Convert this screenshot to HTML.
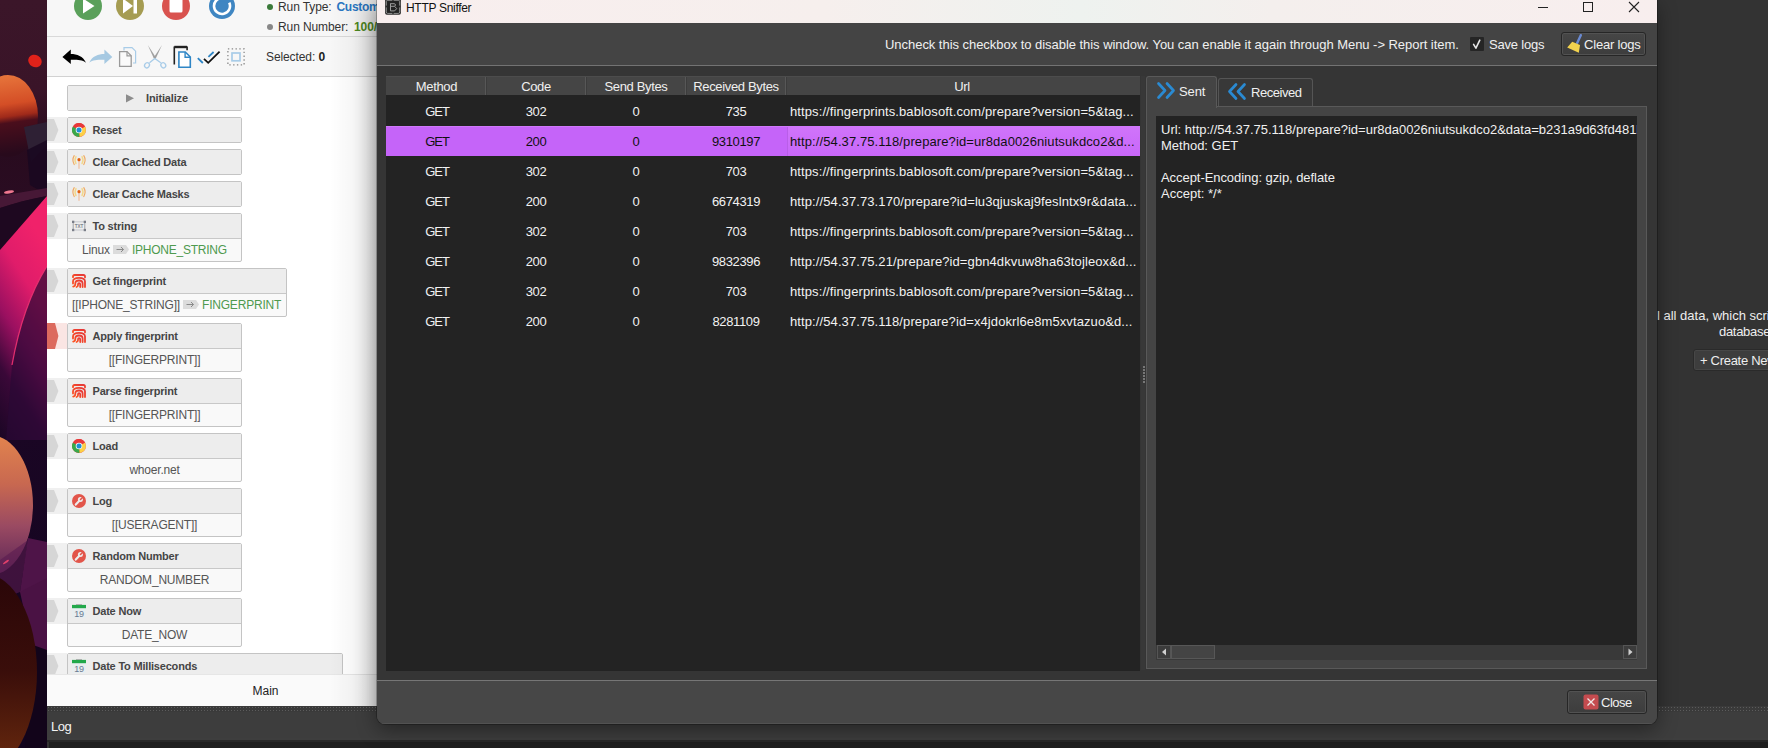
<!DOCTYPE html>
<html><head><meta charset="utf-8">
<style>
*{margin:0;padding:0;box-sizing:border-box}
html,body{width:1768px;height:748px;overflow:hidden;background:#2a2a2a;font-family:"Liberation Sans",sans-serif}
.a{position:absolute}
.tx{white-space:pre}
svg{display:block}
#wall{left:0;top:0;width:47px;height:748px;overflow:hidden}
#bas{left:47px;top:0;width:330px;height:706px;background:#fafafa;overflow:hidden}
#bottom{left:47px;top:706px;width:1721px;height:42px;background:#262626;overflow:hidden}
#right{left:1657px;top:0;width:111px;height:706px;background:#333;overflow:hidden}
#win{left:377px;top:0;width:1280px;height:724px;background:#474747;border-radius:0 0 8px 8px;overflow:hidden;box-shadow:0 0 0 1px rgba(0,0,0,.25),0 6px 20px rgba(0,0,0,.4)}
</style></head><body>
<div id="wall" class="a"><svg width="47" height="748" viewBox="0 0 47 748">
<defs>
<linearGradient id="g0" x1="0" y1="0" x2="0" y2="1"><stop offset="0" stop-color="#3b1629"/><stop offset="0.12" stop-color="#3a1428"/><stop offset="0.19" stop-color="#280b1e"/><stop offset="0.27" stop-color="#2a0c22"/><stop offset="1" stop-color="#2a0c24"/></linearGradient>
<linearGradient id="dome" x1="0" y1="0" x2="0.1" y2="1"><stop offset="0" stop-color="#e97a3e"/><stop offset="0.4" stop-color="#d44e26"/><stop offset="0.55" stop-color="#a02a1a"/><stop offset="0.63" stop-color="#4a0e1c"/><stop offset="1" stop-color="#280a1c"/></linearGradient>
<linearGradient id="mag" x1="0.3" y1="0" x2="0" y2="1"><stop offset="0" stop-color="#f0226a"/><stop offset="0.25" stop-color="#e01c6a"/><stop offset="0.5" stop-color="#9a1060"/><stop offset="0.72" stop-color="#3a0838"/><stop offset="1" stop-color="#1a0624"/></linearGradient>
<linearGradient id="sph" x1="0" y1="0" x2="0" y2="1"><stop offset="0" stop-color="#e2844e"/><stop offset="0.35" stop-color="#c86850"/><stop offset="0.65" stop-color="#9a4a62"/><stop offset="1" stop-color="#5a2456"/></linearGradient>
<linearGradient id="brn" x1="0" y1="0" x2="0" y2="1"><stop offset="0" stop-color="#2a0608"/><stop offset="0.5" stop-color="#3a0e0a"/><stop offset="1" stop-color="#6a2a0e"/></linearGradient>
<linearGradient id="pur" x1="0" y1="0" x2="0" y2="1"><stop offset="0" stop-color="#2a0a2c"/><stop offset="0.3" stop-color="#1a0624"/><stop offset="1" stop-color="#12041e"/></linearGradient>
</defs>
<rect width="47" height="748" fill="url(#g0)"/>
<rect y="300" width="47" height="448" fill="url(#pur)"/>
<ellipse cx="8" cy="116" rx="30" ry="41" fill="url(#dome)"/>
<path d="M24 127L47 122V145L31 162z" fill="#2e2034"/>
<path d="M27 150L47 140V195L30 185z" fill="#1a0820" opacity="0.9"/>
<ellipse cx="35" cy="61" rx="7" ry="6" transform="rotate(30 35 61)" fill="#e0221a"/>
<ellipse cx="9" cy="192" rx="5" ry="1.4" transform="rotate(-10 9 192)" fill="#f07890"/>
<path d="M0 196C15 193 32 191 47 188V196C30 199 15 203 0 208z" fill="#4a1a38" opacity="0.9"/><path d="M0 208C15 203 30 199 47 196L0 250z" fill="#1e0820"/>
<path d="M0 250L47 196V440L0 440z" fill="url(#mag)"/><path d="M47 266C32 290 20 320 12 365L6 440H47z" fill="#2a0834" opacity="0.7"/>
<path d="M47 266C32 290 20 320 12 365" stroke="#ee3272" stroke-width="1.3" fill="none" opacity="0.9"/>
<ellipse cx="-10" cy="505" rx="43" ry="70" fill="url(#sph)"/>
<path d="M28 538L47 542V600L20 592z" fill="#4e1448"/>
<path d="M0 560L28 540 20 592 0 600z" fill="#5a1a50" opacity="0.6"/>
<path d="M20 592L47 578V660L35 660z" fill="#4a1244"/>
<ellipse cx="6" cy="562" rx="3.5" ry="1" transform="rotate(-35 6 562)" fill="#e0406a"/>
<path d="M33 645L47 650V748H25z" fill="#12041a"/>
<ellipse cx="-15" cy="672" rx="52" ry="98" fill="url(#brn)"/>
</svg></div>
<div id="bas" class="a"><div class="a" style="left:0;top:0;width:330px;height:76px;background:#f7f7f7"></div>
<div class="a" style="left:0;top:36px;width:330px;height:1px;background:#d9d9d9"></div>
<div class="a" style="left:0;top:76px;width:330px;height:1px;background:#d2d2d2"></div>
<div class="a" style="left:0;top:77px;width:330px;height:597px;background:#fff"></div>
<svg class="a" style="left:23px;top:-12px" width="170" height="34" viewBox="0 0 170 34">
<circle cx="18" cy="18" r="14" fill="#5aa05a"/><path d="M13 10.5L24.5 18 13 25.5z" fill="#fff"/>
<circle cx="60" cy="18" r="14" fill="#a59c52"/><path d="M53 10.5L63 18 53 25.5z" fill="#fff"/><rect x="63.5" y="10.5" width="3.5" height="15" fill="#fff"/>
<circle cx="106" cy="18" r="14" fill="#d9534f"/><rect x="99.5" y="10.5" width="13" height="14" rx="1.5" fill="#fff"/>
<circle cx="152" cy="18" r="13" fill="#3f86c2"/><path d="M159.25 14.62A8 8 0 1 1 153.39 10.12" fill="none" stroke="#fff" stroke-width="2.6"/><circle cx="152" cy="18" r="4.8" fill="#3f86c2"/>
</svg>
<div class="a" style="left:220px;top:4px;width:6px;height:6px;border-radius:50%;background:#3a7a3a"></div>
<div class="a" style="left:220px;top:24px;width:6px;height:6px;border-radius:50%;background:#888"></div>
<div class="a tx" style="left:231px;top:1px;font-size:12px;line-height:12px;color:#333;font-weight:400;letter-spacing:-0.1px">Run Type:</div>
<div class="a tx" style="left:289.5px;top:1px;font-size:12px;line-height:12px;color:#2a78c4;font-weight:700;letter-spacing:-0.3px">Custom</div>
<div class="a tx" style="left:231px;top:21px;font-size:12px;line-height:12px;color:#333;font-weight:400;letter-spacing:-0.1px">Run Number:</div>
<div class="a tx" style="left:307px;top:21px;font-size:12px;line-height:12px;color:#4e8a22;font-weight:700;letter-spacing:-0.1px">100/</div>
<svg class="a" style="left:13px;top:44px" width="190" height="26" viewBox="0 0 190 26">
<path d="M2.4 12.9L10.8 5.6V9.9C17 9.9 23 12 26 18.7C22 15.5 17 15.7 10.8 15.7V20z" fill="#000"/>
<path d="M52.3 12.9L44.4 5.6V9.9C38.2 9.9 32.2 12 29.2 18.7C33.2 15.5 38.2 15.7 44.4 15.7V20z" fill="#a6c9e2"/>
<path d="M64 6.5V3.6h8l3.6 3.6V19H73" fill="none" stroke="#a8cce8" stroke-width="1.2"/>
<path d="M59.6 7.6h7.4l4.2 4.2V22.4H59.6z" fill="#fafafa" stroke="#9a9a9a" stroke-width="1.3"/><path d="M67 7.6v4.2h4.2" fill="none" stroke="#9a9a9a" stroke-width="1.2"/>
<path d="M87.8 1L95.9 13.6 94.2 15.2z" fill="#a0a0a0"/><path d="M102 1L95.4 15.2 93.8 13.6z" fill="#a0a0a0"/>
<g fill="none" stroke="#a8cce8" stroke-width="1.3"><path d="M94.8 14.4L89.5 18.8M94.8 14.4L100.8 18.8"/><ellipse cx="87" cy="21.3" rx="2.3" ry="2.7" transform="rotate(35 87 21.3)"/><ellipse cx="103.3" cy="21.3" rx="2.3" ry="2.7" transform="rotate(-35 103.3 21.3)"/></g>
<path d="M114.3 20.6V3.3h12.8v3" fill="none" stroke="#222" stroke-width="1.6"/><path d="M114.3 3h12.8" stroke="#222" stroke-width="2.4"/>
<path d="M118.9 8h6.4l5 5v10.2h-11.4z" fill="#fff" stroke="#2f86c6" stroke-width="1.6"/><path d="M125.1 8v5.3h5.3" fill="none" stroke="#2f86c6" stroke-width="1.4"/>
<path d="M137.8 14.2L142.8 19" stroke="#2f86c6" stroke-width="1.8"/><path d="M144 14.8L148.2 18.8 159.6 7.6" fill="none" stroke="#111" stroke-width="1.8"/><path d="M148.4 12.8L153.6 8" stroke="#2f86c6" stroke-width="1.8"/>
<rect x="167.9" y="4.9" width="16.2" height="16" fill="none" stroke="#8a8a8a" stroke-width="1.3" stroke-dasharray="1.4 2.4"/><rect x="172" y="9" width="8" height="7.8" fill="none" stroke="#a8cce8" stroke-width="1.7"/>
</svg>
<div class="a tx" style="left:219px;top:51px;font-size:12px;line-height:12px;color:#333;font-weight:400;letter-spacing:-0.1px">Selected: <b style="color:#222">0</b></div>
<div class="a" style="left:20px;top:85px;width:175px;height:26px;background:#f9f9f9;border:1px solid #c4c4c4;border-radius:2px"></div>
<div class="a" style="left:21px;top:86px;width:173px;height:24px;background:#ededed"></div>
<svg class="a" style="left:79px;top:94px" width="9" height="9" viewBox="0 0 9 9"><path d="M0 0.2L8 4.3 0 8.4z" fill="#8c8c8c"/></svg>
<div class="a tx" style="left:99px;top:93px;font-size:11px;line-height:11px;color:#454545;font-weight:700;letter-spacing:-0.15px">Initialize</div>
<div class="a" style="left:0;top:117px;width:20px;height:26px;background:#f0f0f0"></div>
<svg class="a" style="left:0;top:119px" width="14" height="22" viewBox="0 0 14 22"><path d="M0 0H7L11.4 11.0L7 22H0z" fill="#d6d6d6"/></svg>
<div class="a" style="left:20px;top:117px;width:175px;height:26px;background:#f9f9f9;border:1px solid #c4c4c4;border-radius:2px"></div>
<div class="a" style="left:21px;top:118px;width:173px;height:24px;background:#ededed"></div>
<div class="a" style="left:25px;top:123px;width:14px;height:14px"><svg width="14" height="14" viewBox="0 0 14 14"><circle cx="7" cy="7" r="6.9" fill="#e8393a"/>
<path d="M7 7L13 3.6A6.9 6.9 0 0 1 7.4 13.9z" fill="#fcd046"/><path d="M7 7L7.4 13.9A6.9 6.9 0 0 1 1 3.4z" fill="#3aa84a"/>
<path d="M7 7L1 3.4A6.9 6.9 0 0 1 13 3.6z" fill="#e8393a"/>
<circle cx="7" cy="7" r="3.3" fill="#f4f4f4"/><circle cx="7" cy="7" r="2.5" fill="#1d8fd6"/></svg></div>
<div class="a tx" style="left:45.5px;top:125px;font-size:11px;line-height:11px;color:#454545;font-weight:700;letter-spacing:-0.2px">Reset</div>
<div class="a" style="left:0;top:149px;width:20px;height:26px;background:#f0f0f0"></div>
<svg class="a" style="left:0;top:151px" width="14" height="22" viewBox="0 0 14 22"><path d="M0 0H7L11.4 11.0L7 22H0z" fill="#d6d6d6"/></svg>
<div class="a" style="left:20px;top:149px;width:175px;height:26px;background:#f9f9f9;border:1px solid #c4c4c4;border-radius:2px"></div>
<div class="a" style="left:21px;top:150px;width:173px;height:24px;background:#ededed"></div>
<div class="a" style="left:25px;top:155px;width:14px;height:14px"><svg width="14" height="14" viewBox="0 0 14 14"><g fill="none" stroke-linecap="round">
<path d="M2.2 0.6Q-0.4 5 2.2 9.6M11.8 0.6Q14.4 5 11.8 9.6" stroke="#f0a860" stroke-width="1.1"/><path d="M4 1.6Q2 5 4 8.6M10 1.6Q12 5 10 8.6" stroke="#f3d888" stroke-width="1.4"/></g>
<path d="M7 5v8.8" stroke="#f0c4a8" stroke-width="1.4"/><circle cx="7" cy="4.7" r="1.6" fill="#e2600e"/></svg></div>
<div class="a tx" style="left:45.5px;top:157px;font-size:11px;line-height:11px;color:#454545;font-weight:700;letter-spacing:-0.2px">Clear Cached Data</div>
<div class="a" style="left:0;top:181px;width:20px;height:26px;background:#f0f0f0"></div>
<svg class="a" style="left:0;top:183px" width="14" height="22" viewBox="0 0 14 22"><path d="M0 0H7L11.4 11.0L7 22H0z" fill="#d6d6d6"/></svg>
<div class="a" style="left:20px;top:181px;width:175px;height:26px;background:#f9f9f9;border:1px solid #c4c4c4;border-radius:2px"></div>
<div class="a" style="left:21px;top:182px;width:173px;height:24px;background:#ededed"></div>
<div class="a" style="left:25px;top:187px;width:14px;height:14px"><svg width="14" height="14" viewBox="0 0 14 14"><g fill="none" stroke-linecap="round">
<path d="M2.2 0.6Q-0.4 5 2.2 9.6M11.8 0.6Q14.4 5 11.8 9.6" stroke="#f0a860" stroke-width="1.1"/><path d="M4 1.6Q2 5 4 8.6M10 1.6Q12 5 10 8.6" stroke="#f3d888" stroke-width="1.4"/></g>
<path d="M7 5v8.8" stroke="#f0c4a8" stroke-width="1.4"/><circle cx="7" cy="4.7" r="1.6" fill="#e2600e"/></svg></div>
<div class="a tx" style="left:45.5px;top:189px;font-size:11px;line-height:11px;color:#454545;font-weight:700;letter-spacing:-0.2px">Clear Cache Masks</div>
<div class="a" style="left:0;top:213px;width:20px;height:26px;background:#f0f0f0"></div>
<svg class="a" style="left:0;top:215px" width="14" height="22" viewBox="0 0 14 22"><path d="M0 0H7L11.4 11.0L7 22H0z" fill="#d6d6d6"/></svg>
<div class="a" style="left:20px;top:213px;width:175px;height:49px;background:#f9f9f9;border:1px solid #c4c4c4;border-radius:2px"></div>
<div class="a" style="left:21px;top:214px;width:173px;height:24px;background:#ededed"></div>
<div class="a" style="left:21px;top:238px;width:173px;height:1px;background:#c8c8c8"></div>
<div class="a" style="left:25px;top:219px;width:14px;height:14px"><svg width="14" height="14" viewBox="0 0 14 14"><path d="M1 2.8H13M1 11H13" stroke="#d2d4d8" stroke-width="1.6"/><path d="M1.2 2.8V11M12.8 2.8V11" stroke="#8a8e96" stroke-width="0.8"/>
<rect x="0" y="1.7" width="2.3" height="2.3" fill="#7a7e88"/><rect x="11.7" y="1.7" width="2.3" height="2.3" fill="#7a7e88"/><rect x="0" y="9.9" width="2.3" height="2.3" fill="#7a7e88"/><rect x="11.7" y="9.9" width="2.3" height="2.3" fill="#7a7e88"/>
<text x="7" y="8.9" font-family="Liberation Sans" font-weight="700" font-size="4.6" text-anchor="middle" fill="#80848c">TXT</text></svg></div>
<div class="a tx" style="left:45.5px;top:221px;font-size:11px;line-height:11px;color:#454545;font-weight:700;letter-spacing:-0.2px">To string</div>
<div class="a tx" style="left:35px;top:244px;font-size:12px;line-height:12px;color:#555;font-weight:400;letter-spacing:-0.2px">Linux</div><svg class="a" style="left:66px;top:245px" width="16" height="9" viewBox="0 0 16 9"><path d="M0 0h13l3 4.5-3 4.5H0z" fill="#dcdcdc"/><path d="M3.5 4.5h7M8 2l2.5 2.5L8 7" stroke="#8a8a8a" stroke-width="1" fill="none"/></svg><div class="a tx" style="left:85px;top:244px;font-size:12px;line-height:12px;color:#4f9a4f;font-weight:400;letter-spacing:-0.25px">IPHONE_STRING</div>
<div class="a" style="left:0;top:268px;width:20px;height:26px;background:#f0f0f0"></div>
<svg class="a" style="left:0;top:270px" width="14" height="22" viewBox="0 0 14 22"><path d="M0 0H7L11.4 11.0L7 22H0z" fill="#d6d6d6"/></svg>
<div class="a" style="left:20px;top:268px;width:220px;height:49px;background:#f9f9f9;border:1px solid #c4c4c4;border-radius:2px"></div>
<div class="a" style="left:21px;top:269px;width:218px;height:24px;background:#ededed"></div>
<div class="a" style="left:21px;top:293px;width:218px;height:1px;background:#c8c8c8"></div>
<div class="a" style="left:25px;top:274px;width:14px;height:14px"><svg width="14" height="14" viewBox="0 0 14 14"><defs><linearGradient id="fpg" x1="0" y1="1" x2="1" y2="0"><stop offset="0" stop-color="#ff5520"/><stop offset="1" stop-color="#e53838"/></linearGradient></defs>
<g fill="none" stroke="url(#fpg)" stroke-width="1.8" stroke-linecap="round"><path d="M1 3.2V2.6Q1 1 2.6 1H11.4Q13 1 13 2.6V3.4"/><path d="M1 9.5V7.5Q1 3.8 7 3.8Q13 3.8 13 7.5V13"/><path d="M1.2 12.6Q3.3 12.2 3.3 10V9.6Q3.3 6.5 7 6.5Q10.6 6.5 10.6 9.6V13"/><path d="M4.6 13Q6 12.6 6 11V10.6Q6 9.1 7 9.1Q8.2 9.1 8.2 10.6V13"/></g></svg></div>
<div class="a tx" style="left:45.5px;top:276px;font-size:11px;line-height:11px;color:#454545;font-weight:700;letter-spacing:-0.2px">Get fingerprint</div>
<div class="a tx" style="left:25px;top:299px;font-size:12px;line-height:12px;color:#555;font-weight:400;letter-spacing:-0.2px">[[IPHONE_STRING]]</div><svg class="a" style="left:136px;top:300px" width="16" height="9" viewBox="0 0 16 9"><path d="M0 0h13l3 4.5-3 4.5H0z" fill="#dcdcdc"/><path d="M3.5 4.5h7M8 2l2.5 2.5L8 7" stroke="#8a8a8a" stroke-width="1" fill="none"/></svg><div class="a tx" style="left:155px;top:299px;font-size:12px;line-height:12px;color:#4f9a4f;font-weight:400;letter-spacing:-0.2px">FINGERPRINT</div>
<div class="a" style="left:0;top:323px;width:20px;height:26px;background:#fae5e3"></div>
<svg class="a" style="left:0;top:323px" width="14" height="26" viewBox="0 0 14 26"><path d="M0 0H8L11.4 13.0L8 26H0z" fill="#dc6a5e"/></svg>
<div class="a" style="left:20px;top:323px;width:175px;height:49px;background:#f9f9f9;border:1px solid #c4c4c4;border-radius:2px"></div>
<div class="a" style="left:21px;top:324px;width:173px;height:24px;background:#ededed"></div>
<div class="a" style="left:21px;top:348px;width:173px;height:1px;background:#c8c8c8"></div>
<div class="a" style="left:25px;top:329px;width:14px;height:14px"><svg width="14" height="14" viewBox="0 0 14 14"><defs><linearGradient id="fpg" x1="0" y1="1" x2="1" y2="0"><stop offset="0" stop-color="#ff5520"/><stop offset="1" stop-color="#e53838"/></linearGradient></defs>
<g fill="none" stroke="url(#fpg)" stroke-width="1.8" stroke-linecap="round"><path d="M1 3.2V2.6Q1 1 2.6 1H11.4Q13 1 13 2.6V3.4"/><path d="M1 9.5V7.5Q1 3.8 7 3.8Q13 3.8 13 7.5V13"/><path d="M1.2 12.6Q3.3 12.2 3.3 10V9.6Q3.3 6.5 7 6.5Q10.6 6.5 10.6 9.6V13"/><path d="M4.6 13Q6 12.6 6 11V10.6Q6 9.1 7 9.1Q8.2 9.1 8.2 10.6V13"/></g></svg></div>
<div class="a tx" style="left:45.5px;top:331px;font-size:11px;line-height:11px;color:#454545;font-weight:700;letter-spacing:-0.2px">Apply fingerprint</div>
<div class="a tx" style="left:22.5px;top:354px;width:170px;text-align:center;font-size:12px;line-height:12px;color:#555;font-weight:400;letter-spacing:-0.2px">[[FINGERPRINT]]</div>
<div class="a" style="left:0;top:378px;width:20px;height:26px;background:#f0f0f0"></div>
<svg class="a" style="left:0;top:380px" width="14" height="22" viewBox="0 0 14 22"><path d="M0 0H7L11.4 11.0L7 22H0z" fill="#d6d6d6"/></svg>
<div class="a" style="left:20px;top:378px;width:175px;height:49px;background:#f9f9f9;border:1px solid #c4c4c4;border-radius:2px"></div>
<div class="a" style="left:21px;top:379px;width:173px;height:24px;background:#ededed"></div>
<div class="a" style="left:21px;top:403px;width:173px;height:1px;background:#c8c8c8"></div>
<div class="a" style="left:25px;top:384px;width:14px;height:14px"><svg width="14" height="14" viewBox="0 0 14 14"><defs><linearGradient id="fpg" x1="0" y1="1" x2="1" y2="0"><stop offset="0" stop-color="#ff5520"/><stop offset="1" stop-color="#e53838"/></linearGradient></defs>
<g fill="none" stroke="url(#fpg)" stroke-width="1.8" stroke-linecap="round"><path d="M1 3.2V2.6Q1 1 2.6 1H11.4Q13 1 13 2.6V3.4"/><path d="M1 9.5V7.5Q1 3.8 7 3.8Q13 3.8 13 7.5V13"/><path d="M1.2 12.6Q3.3 12.2 3.3 10V9.6Q3.3 6.5 7 6.5Q10.6 6.5 10.6 9.6V13"/><path d="M4.6 13Q6 12.6 6 11V10.6Q6 9.1 7 9.1Q8.2 9.1 8.2 10.6V13"/></g></svg></div>
<div class="a tx" style="left:45.5px;top:386px;font-size:11px;line-height:11px;color:#454545;font-weight:700;letter-spacing:-0.2px">Parse fingerprint</div>
<div class="a tx" style="left:22.5px;top:409px;width:170px;text-align:center;font-size:12px;line-height:12px;color:#555;font-weight:400;letter-spacing:-0.2px">[[FINGERPRINT]]</div>
<div class="a" style="left:0;top:433px;width:20px;height:26px;background:#f0f0f0"></div>
<svg class="a" style="left:0;top:435px" width="14" height="22" viewBox="0 0 14 22"><path d="M0 0H7L11.4 11.0L7 22H0z" fill="#d6d6d6"/></svg>
<div class="a" style="left:20px;top:433px;width:175px;height:49px;background:#f9f9f9;border:1px solid #c4c4c4;border-radius:2px"></div>
<div class="a" style="left:21px;top:434px;width:173px;height:24px;background:#ededed"></div>
<div class="a" style="left:21px;top:458px;width:173px;height:1px;background:#c8c8c8"></div>
<div class="a" style="left:25px;top:439px;width:14px;height:14px"><svg width="14" height="14" viewBox="0 0 14 14"><circle cx="7" cy="7" r="6.9" fill="#e8393a"/>
<path d="M7 7L13 3.6A6.9 6.9 0 0 1 7.4 13.9z" fill="#fcd046"/><path d="M7 7L7.4 13.9A6.9 6.9 0 0 1 1 3.4z" fill="#3aa84a"/>
<path d="M7 7L1 3.4A6.9 6.9 0 0 1 13 3.6z" fill="#e8393a"/>
<circle cx="7" cy="7" r="3.3" fill="#f4f4f4"/><circle cx="7" cy="7" r="2.5" fill="#1d8fd6"/></svg></div>
<div class="a tx" style="left:45.5px;top:441px;font-size:11px;line-height:11px;color:#454545;font-weight:700;letter-spacing:-0.2px">Load</div>
<div class="a tx" style="left:22.5px;top:464px;width:170px;text-align:center;font-size:12px;line-height:12px;color:#555;font-weight:400;letter-spacing:-0.2px">whoer.net</div>
<div class="a" style="left:0;top:488px;width:20px;height:26px;background:#f0f0f0"></div>
<svg class="a" style="left:0;top:490px" width="14" height="22" viewBox="0 0 14 22"><path d="M0 0H7L11.4 11.0L7 22H0z" fill="#d6d6d6"/></svg>
<div class="a" style="left:20px;top:488px;width:175px;height:49px;background:#f9f9f9;border:1px solid #c4c4c4;border-radius:2px"></div>
<div class="a" style="left:21px;top:489px;width:173px;height:24px;background:#ededed"></div>
<div class="a" style="left:21px;top:513px;width:173px;height:1px;background:#c8c8c8"></div>
<div class="a" style="left:25px;top:494px;width:14px;height:14px"><svg width="14" height="14" viewBox="0 0 14 14"><circle cx="7" cy="7" r="7" fill="#e2554a"/>
<path d="M3.8 10.6L7.6 6.6" stroke="#ececec" stroke-width="2.2" stroke-linecap="round"/><circle cx="8.4" cy="5.6" r="2.5" fill="#ececec"/><path d="M8.5 5.5L10.8 3.2" stroke="#e2554a" stroke-width="1.6" stroke-linecap="round"/></svg></div>
<div class="a tx" style="left:45.5px;top:496px;font-size:11px;line-height:11px;color:#454545;font-weight:700;letter-spacing:-0.2px">Log</div>
<div class="a tx" style="left:22.5px;top:519px;width:170px;text-align:center;font-size:12px;line-height:12px;color:#555;font-weight:400;letter-spacing:-0.2px">[[USERAGENT]]</div>
<div class="a" style="left:0;top:543px;width:20px;height:26px;background:#f0f0f0"></div>
<svg class="a" style="left:0;top:545px" width="14" height="22" viewBox="0 0 14 22"><path d="M0 0H7L11.4 11.0L7 22H0z" fill="#d6d6d6"/></svg>
<div class="a" style="left:20px;top:543px;width:175px;height:49px;background:#f9f9f9;border:1px solid #c4c4c4;border-radius:2px"></div>
<div class="a" style="left:21px;top:544px;width:173px;height:24px;background:#ededed"></div>
<div class="a" style="left:21px;top:568px;width:173px;height:1px;background:#c8c8c8"></div>
<div class="a" style="left:25px;top:549px;width:14px;height:14px"><svg width="14" height="14" viewBox="0 0 14 14"><circle cx="7" cy="7" r="7" fill="#e2554a"/>
<path d="M3.8 10.6L7.6 6.6" stroke="#ececec" stroke-width="2.2" stroke-linecap="round"/><circle cx="8.4" cy="5.6" r="2.5" fill="#ececec"/><path d="M8.5 5.5L10.8 3.2" stroke="#e2554a" stroke-width="1.6" stroke-linecap="round"/></svg></div>
<div class="a tx" style="left:45.5px;top:551px;font-size:11px;line-height:11px;color:#454545;font-weight:700;letter-spacing:-0.2px">Random Number</div>
<div class="a tx" style="left:22.5px;top:574px;width:170px;text-align:center;font-size:12px;line-height:12px;color:#555;font-weight:400;letter-spacing:-0.2px">RANDOM_NUMBER</div>
<div class="a" style="left:0;top:598px;width:20px;height:26px;background:#f0f0f0"></div>
<svg class="a" style="left:0;top:600px" width="14" height="22" viewBox="0 0 14 22"><path d="M0 0H7L11.4 11.0L7 22H0z" fill="#d6d6d6"/></svg>
<div class="a" style="left:20px;top:598px;width:175px;height:49px;background:#f9f9f9;border:1px solid #c4c4c4;border-radius:2px"></div>
<div class="a" style="left:21px;top:599px;width:173px;height:24px;background:#ededed"></div>
<div class="a" style="left:21px;top:623px;width:173px;height:1px;background:#c8c8c8"></div>
<div class="a" style="left:25px;top:604px;width:14px;height:14px"><svg width="14" height="14" viewBox="0 0 14 14"><rect x="0" y="4" width="14" height="10" fill="#e8eef0"/><rect x="0" y="0.9" width="14" height="3.3" fill="#22a84a"/><path d="M4 0.3H10" stroke="#8a8a8a" stroke-width="0.7"/>
<text x="7" y="13" font-family="Liberation Sans" font-size="9" text-anchor="middle" fill="#6a7a90" letter-spacing="-0.3">19</text></svg></div>
<div class="a tx" style="left:45.5px;top:606px;font-size:11px;line-height:11px;color:#454545;font-weight:700;letter-spacing:-0.2px">Date Now</div>
<div class="a tx" style="left:22.5px;top:629px;width:170px;text-align:center;font-size:12px;line-height:12px;color:#555;font-weight:400;letter-spacing:-0.2px">DATE_NOW</div>
<div class="a" style="left:0;top:653px;width:20px;height:26px;background:#f0f0f0"></div>
<svg class="a" style="left:0;top:655px" width="14" height="22" viewBox="0 0 14 22"><path d="M0 0H7L11.4 11.0L7 22H0z" fill="#d6d6d6"/></svg>
<div class="a" style="left:20px;top:653px;width:276px;height:49px;background:#f9f9f9;border:1px solid #c4c4c4;border-radius:2px"></div>
<div class="a" style="left:21px;top:654px;width:274px;height:24px;background:#ededed"></div>
<div class="a" style="left:21px;top:678px;width:274px;height:1px;background:#c8c8c8"></div>
<div class="a" style="left:25px;top:659px;width:14px;height:14px"><svg width="14" height="14" viewBox="0 0 14 14"><rect x="0" y="4" width="14" height="10" fill="#e8eef0"/><rect x="0" y="0.9" width="14" height="3.3" fill="#22a84a"/><path d="M4 0.3H10" stroke="#8a8a8a" stroke-width="0.7"/>
<text x="7" y="13" font-family="Liberation Sans" font-size="9" text-anchor="middle" fill="#6a7a90" letter-spacing="-0.3">19</text></svg></div>
<div class="a tx" style="left:45.5px;top:661px;font-size:11px;line-height:11px;color:#454545;font-weight:700;letter-spacing:-0.2px">Date To Milliseconds</div>
<div class="a tx" style="left:22.5px;top:684px;width:170px;text-align:center;font-size:12px;line-height:12px;color:#555;font-weight:400;letter-spacing:-0.2px"></div>
<div class="a" style="left:0;top:674px;width:330px;height:32px;background:#fafafa;border-top:1px solid #e6e6e6"></div>
<div class="a tx" style="left:205.5px;top:685px;font-size:12px;line-height:12px;color:#222;font-weight:400;">Main</div>
<div class="a" style="left:283px;top:0;width:47px;height:706px;background:linear-gradient(90deg,rgba(0,0,0,0),rgba(0,0,0,.03) 45%,rgba(0,0,0,.13))"></div></div>
<div id="bottom" class="a">
<div class="a" style="left:0;top:0;width:1721px;height:6px;background:#3a3a3a;background-image:radial-gradient(circle,#5c5c5c 0.8px,transparent 1px);background-size:3px 3px;background-position:0 0"></div>
<div class="a" style="left:0;top:6px;width:1721px;height:26px;background:#3d3d3d"></div>
<div class="a" style="left:0;top:32px;width:1721px;height:2px;background:#3e3e3e"></div>
<div class="a" style="left:0;top:34px;width:1721px;height:2px;background:#282828"></div>
<div class="a" style="left:0;top:36px;width:1721px;height:6px;background:#1f1f1f;border-left:2px solid #333"></div>
<div class="a tx" style="left:4px;top:14px;font-size:13px;line-height:13px;color:#f4f4f4;font-weight:400;letter-spacing:-0.5px">Log</div></div>
<div id="right" class="a"><div class="a tx" style="left:0px;top:309px;font-size:13px;line-height:13px;color:#eee;font-weight:400;letter-spacing:0px">l all data, which script</div><div class="a tx" style="left:62px;top:325px;font-size:13px;line-height:13px;color:#eee;font-weight:400;letter-spacing:-0.3px">database</div><div class="a" style="left:36px;top:349px;width:90px;height:22px;background:#3d3d3d;border:1px solid #2a2a2a;border-radius:3px;box-shadow:inset 0 0 0 1px #474747"></div><div class="a tx" style="left:43px;top:354px;font-size:13px;line-height:13px;color:#eee;font-weight:400;letter-spacing:-0.3px">+ Create New</div></div>
<div id="win" class="a"><div class="a" style="left:0;top:0;width:1280px;height:23px;background:linear-gradient(90deg,#f8eeee 0%,#f6efed 35%,#eef2ef 55%,#f4efed 70%,#f8eeee 100%)"></div>
<svg class="a" style="left:7px;top:-2px" width="18" height="18" viewBox="0 0 18 18">
<rect x="1.1" y="0.5" width="15.8" height="16.2" rx="1.8" fill="#2c2c2c"/>
<g fill="none" stroke="#8e8e8e" stroke-width="1"><path d="M2.3 7.6V3.7Q2.3 2.3 3.8 2.3H8.3M9.7 2.3H14.2Q15.7 2.3 15.7 3.7V7.6M15.7 9.4V13.9Q15.7 15.4 14.2 15.4H9.7M8.3 15.4H3.8Q2.3 15.4 2.3 13.9V9.4"/></g>
<rect x="3.2" y="3.2" width="11.5" height="11.4" fill="#232323"/>
<path d="M6.5 5.7H10.3Q11.4 5.7 11.4 6.9Q11.4 8.3 10.3 8.3H6.5M6.5 5.4V12.9H10.6L12.7 10.6 10.6 8.3" fill="none" stroke="#9c9c9c" stroke-width="1"/>
</svg>
<div class="a tx " style="left:29px;top:2px;font-size:12px;line-height:12px;color:#111;font-weight:400;letter-spacing:-0.3px">HTTP Sniffer</div>
<div class="a" style="left:1161px;top:7px;width:10px;height:1px;background:#222"></div>
<div class="a" style="left:1206px;top:2px;width:10px;height:10px;border:1px solid #222"></div>
<svg class="a" style="left:1251px;top:1px" width="12" height="12" viewBox="0 0 12 12"><path d="M1 1L11 11M11 1L1 11" stroke="#222" stroke-width="1.1"/></svg>
<div class="a" style="left:0;top:23px;width:1280px;height:42px;background:#444"></div>
<div class="a" style="left:0;top:65px;width:1280px;height:1px;background:#737373"></div>
<div class="a tx " style="left:508px;top:38px;font-size:13px;line-height:13px;color:#f0f0f0;font-weight:400;letter-spacing:-0.04px">Uncheck this checkbox to disable this window. You can enable it again through Menu -&gt; Report item.</div>
<div class="a" style="left:1093px;top:37px;width:14px;height:14px;background:#252525;border-radius:1px"></div>
<svg class="a" style="left:1093px;top:37px" width="14" height="14" viewBox="0 0 14 14"><path d="M3.6 7.4L5.9 11.2 9.8 3.2" fill="none" stroke="#e6e6e6" stroke-width="1.6" stroke-linejoin="round" stroke-linecap="round"/></svg>
<div class="a tx " style="left:1112px;top:38px;font-size:13px;line-height:13px;color:#f0f0f0;font-weight:400;letter-spacing:-0.2px">Save logs</div>
<div class="a" style="left:1184px;top:32px;width:85px;height:24px;background:linear-gradient(180deg,#464646,#3d3d3d);border:1px solid #262626;border-radius:3px;box-shadow:inset 0 0 0 1px #525252"></div>
<svg class="a" style="left:1189px;top:34px" width="18" height="20" viewBox="0 0 18 20">
<path d="M14.8 1.2L11.2 9" stroke="#6a8ad2" stroke-width="2.4" stroke-linecap="round"/>
<path d="M6.2 7.8L14 11 12.8 18.8 1.2 13.4z" fill="#f2d24e"/>
</svg>
<div class="a tx " style="left:1207px;top:38px;font-size:13px;line-height:13px;color:#f0f0f0;font-weight:400;letter-spacing:-0.2px">Clear logs</div>
<div class="a" style="left:0;top:66px;width:1280px;height:614px;background:#353535"></div>
<div class="a" style="left:9px;top:76px;width:754px;height:595px;background:#232323"></div>
<div class="a" style="left:9px;top:76px;width:754px;height:19px;background:#454545;border-top:1px solid #4c4c4c"></div>
<div class="a" style="left:108px;top:77px;width:1px;height:18px;background:#575757"></div>
<div class="a" style="left:109px;top:77px;width:1px;height:18px;background:#3c3c3c"></div>
<div class="a" style="left:208px;top:77px;width:1px;height:18px;background:#575757"></div>
<div class="a" style="left:209px;top:77px;width:1px;height:18px;background:#3c3c3c"></div>
<div class="a" style="left:308px;top:77px;width:1px;height:18px;background:#575757"></div>
<div class="a" style="left:309px;top:77px;width:1px;height:18px;background:#3c3c3c"></div>
<div class="a" style="left:408px;top:77px;width:1px;height:18px;background:#575757"></div>
<div class="a" style="left:409px;top:77px;width:1px;height:18px;background:#3c3c3c"></div>
<div class="a tx" style="left:-40.5px;top:80px;width:200px;text-align:center;font-size:13px;line-height:13px;color:#f0f0f0;font-weight:400;letter-spacing:-0.35px">Method</div>
<div class="a tx" style="left:59.0px;top:80px;width:200px;text-align:center;font-size:13px;line-height:13px;color:#f0f0f0;font-weight:400;letter-spacing:-0.35px">Code</div>
<div class="a tx" style="left:159.0px;top:80px;width:200px;text-align:center;font-size:13px;line-height:13px;color:#f0f0f0;font-weight:400;letter-spacing:-0.35px">Send Bytes</div>
<div class="a tx" style="left:259.0px;top:80px;width:200px;text-align:center;font-size:13px;line-height:13px;color:#f0f0f0;font-weight:400;letter-spacing:-0.35px">Received Bytes</div>
<div class="a tx" style="left:485.0px;top:80px;width:200px;text-align:center;font-size:13px;line-height:13px;color:#f0f0f0;font-weight:400;letter-spacing:-0.35px">Url</div>
<div class="a tx" style="left:-40.0px;top:105px;width:200px;text-align:center;font-size:13px;line-height:13px;color:#f2f2f2;font-weight:400;letter-spacing:-1px">GET</div>
<div class="a tx" style="left:59.0px;top:105px;width:200px;text-align:center;font-size:13px;line-height:13px;color:#f2f2f2;font-weight:400;letter-spacing:-0.35px">302</div>
<div class="a tx" style="left:159.0px;top:105px;width:200px;text-align:center;font-size:13px;line-height:13px;color:#f2f2f2;font-weight:400;letter-spacing:-0.35px">0</div>
<div class="a tx" style="left:259.0px;top:105px;width:200px;text-align:center;font-size:13px;line-height:13px;color:#f2f2f2;font-weight:400;letter-spacing:-0.35px">735</div>
<div class="a tx " style="left:413px;top:105px;font-size:13px;line-height:13px;color:#f2f2f2;font-weight:400;letter-spacing:0.1px">https://fingerprints.bablosoft.com/prepare?version=5&amp;tag...</div>
<div class="a" style="left:9px;top:126px;width:754px;height:30px;background:#c564f9;border-top:1px solid #cf78fb"></div>
<div class="a" style="left:410px;top:127px;width:353px;height:29px;background:linear-gradient(180deg,#d074fa,#c867f9)"></div>
<div class="a" style="left:410px;top:127px;width:1px;height:29px;background:#b95ee8"></div>
<div class="a tx" style="left:-40.0px;top:135px;width:200px;text-align:center;font-size:13px;line-height:13px;color:#111;font-weight:400;letter-spacing:-1px">GET</div>
<div class="a tx" style="left:59.0px;top:135px;width:200px;text-align:center;font-size:13px;line-height:13px;color:#111;font-weight:400;letter-spacing:-0.35px">200</div>
<div class="a tx" style="left:159.0px;top:135px;width:200px;text-align:center;font-size:13px;line-height:13px;color:#111;font-weight:400;letter-spacing:-0.35px">0</div>
<div class="a tx" style="left:259.0px;top:135px;width:200px;text-align:center;font-size:13px;line-height:13px;color:#111;font-weight:400;letter-spacing:-0.35px">9310197</div>
<div class="a tx " style="left:413px;top:135px;font-size:13px;line-height:13px;color:#111;font-weight:400;letter-spacing:0.1px">http://54.37.75.118/prepare?id=ur8da0026niutsukdco2&amp;d...</div>
<div class="a tx" style="left:-40.0px;top:165px;width:200px;text-align:center;font-size:13px;line-height:13px;color:#f2f2f2;font-weight:400;letter-spacing:-1px">GET</div>
<div class="a tx" style="left:59.0px;top:165px;width:200px;text-align:center;font-size:13px;line-height:13px;color:#f2f2f2;font-weight:400;letter-spacing:-0.35px">302</div>
<div class="a tx" style="left:159.0px;top:165px;width:200px;text-align:center;font-size:13px;line-height:13px;color:#f2f2f2;font-weight:400;letter-spacing:-0.35px">0</div>
<div class="a tx" style="left:259.0px;top:165px;width:200px;text-align:center;font-size:13px;line-height:13px;color:#f2f2f2;font-weight:400;letter-spacing:-0.35px">703</div>
<div class="a tx " style="left:413px;top:165px;font-size:13px;line-height:13px;color:#f2f2f2;font-weight:400;letter-spacing:0.1px">https://fingerprints.bablosoft.com/prepare?version=5&amp;tag...</div>
<div class="a tx" style="left:-40.0px;top:195px;width:200px;text-align:center;font-size:13px;line-height:13px;color:#f2f2f2;font-weight:400;letter-spacing:-1px">GET</div>
<div class="a tx" style="left:59.0px;top:195px;width:200px;text-align:center;font-size:13px;line-height:13px;color:#f2f2f2;font-weight:400;letter-spacing:-0.35px">200</div>
<div class="a tx" style="left:159.0px;top:195px;width:200px;text-align:center;font-size:13px;line-height:13px;color:#f2f2f2;font-weight:400;letter-spacing:-0.35px">0</div>
<div class="a tx" style="left:259.0px;top:195px;width:200px;text-align:center;font-size:13px;line-height:13px;color:#f2f2f2;font-weight:400;letter-spacing:-0.35px">6674319</div>
<div class="a tx " style="left:413px;top:195px;font-size:13px;line-height:13px;color:#f2f2f2;font-weight:400;letter-spacing:0.1px">http://54.37.73.170/prepare?id=lu3qjuskaj9feslntx9r&amp;data...</div>
<div class="a tx" style="left:-40.0px;top:225px;width:200px;text-align:center;font-size:13px;line-height:13px;color:#f2f2f2;font-weight:400;letter-spacing:-1px">GET</div>
<div class="a tx" style="left:59.0px;top:225px;width:200px;text-align:center;font-size:13px;line-height:13px;color:#f2f2f2;font-weight:400;letter-spacing:-0.35px">302</div>
<div class="a tx" style="left:159.0px;top:225px;width:200px;text-align:center;font-size:13px;line-height:13px;color:#f2f2f2;font-weight:400;letter-spacing:-0.35px">0</div>
<div class="a tx" style="left:259.0px;top:225px;width:200px;text-align:center;font-size:13px;line-height:13px;color:#f2f2f2;font-weight:400;letter-spacing:-0.35px">703</div>
<div class="a tx " style="left:413px;top:225px;font-size:13px;line-height:13px;color:#f2f2f2;font-weight:400;letter-spacing:0.1px">https://fingerprints.bablosoft.com/prepare?version=5&amp;tag...</div>
<div class="a tx" style="left:-40.0px;top:255px;width:200px;text-align:center;font-size:13px;line-height:13px;color:#f2f2f2;font-weight:400;letter-spacing:-1px">GET</div>
<div class="a tx" style="left:59.0px;top:255px;width:200px;text-align:center;font-size:13px;line-height:13px;color:#f2f2f2;font-weight:400;letter-spacing:-0.35px">200</div>
<div class="a tx" style="left:159.0px;top:255px;width:200px;text-align:center;font-size:13px;line-height:13px;color:#f2f2f2;font-weight:400;letter-spacing:-0.35px">0</div>
<div class="a tx" style="left:259.0px;top:255px;width:200px;text-align:center;font-size:13px;line-height:13px;color:#f2f2f2;font-weight:400;letter-spacing:-0.35px">9832396</div>
<div class="a tx " style="left:413px;top:255px;font-size:13px;line-height:13px;color:#f2f2f2;font-weight:400;letter-spacing:0.1px">http://54.37.75.21/prepare?id=gbn4dkvuw8ha63tojleox&amp;d...</div>
<div class="a tx" style="left:-40.0px;top:285px;width:200px;text-align:center;font-size:13px;line-height:13px;color:#f2f2f2;font-weight:400;letter-spacing:-1px">GET</div>
<div class="a tx" style="left:59.0px;top:285px;width:200px;text-align:center;font-size:13px;line-height:13px;color:#f2f2f2;font-weight:400;letter-spacing:-0.35px">302</div>
<div class="a tx" style="left:159.0px;top:285px;width:200px;text-align:center;font-size:13px;line-height:13px;color:#f2f2f2;font-weight:400;letter-spacing:-0.35px">0</div>
<div class="a tx" style="left:259.0px;top:285px;width:200px;text-align:center;font-size:13px;line-height:13px;color:#f2f2f2;font-weight:400;letter-spacing:-0.35px">703</div>
<div class="a tx " style="left:413px;top:285px;font-size:13px;line-height:13px;color:#f2f2f2;font-weight:400;letter-spacing:0.1px">https://fingerprints.bablosoft.com/prepare?version=5&amp;tag...</div>
<div class="a tx" style="left:-40.0px;top:315px;width:200px;text-align:center;font-size:13px;line-height:13px;color:#f2f2f2;font-weight:400;letter-spacing:-1px">GET</div>
<div class="a tx" style="left:59.0px;top:315px;width:200px;text-align:center;font-size:13px;line-height:13px;color:#f2f2f2;font-weight:400;letter-spacing:-0.35px">200</div>
<div class="a tx" style="left:159.0px;top:315px;width:200px;text-align:center;font-size:13px;line-height:13px;color:#f2f2f2;font-weight:400;letter-spacing:-0.35px">0</div>
<div class="a tx" style="left:259.0px;top:315px;width:200px;text-align:center;font-size:13px;line-height:13px;color:#f2f2f2;font-weight:400;letter-spacing:-0.35px">8281109</div>
<div class="a tx " style="left:413px;top:315px;font-size:13px;line-height:13px;color:#f2f2f2;font-weight:400;letter-spacing:0.1px">http://54.37.75.118/prepare?id=x4jdokrl6e8m5xvtazuo&amp;d...</div>
<div class="a" style="left:764px;top:76px;width:4px;height:594px;background:#383838"></div>
<div class="a" style="left:766px;top:366px;width:2px;height:2px;background:#777"></div>
<div class="a" style="left:766px;top:369px;width:2px;height:2px;background:#777"></div>
<div class="a" style="left:766px;top:372px;width:2px;height:2px;background:#777"></div>
<div class="a" style="left:766px;top:375px;width:2px;height:2px;background:#777"></div>
<div class="a" style="left:766px;top:378px;width:2px;height:2px;background:#777"></div>
<div class="a" style="left:766px;top:381px;width:2px;height:2px;background:#777"></div>
<div class="a" style="left:841px;top:78px;width:95px;height:29px;background:#383838;border:1px solid #555;border-bottom:none;border-radius:3px 3px 0 0"></div>
<div class="a" style="left:769px;top:106px;width:501px;height:563px;background:#444;border:1px solid #595959"></div>
<div class="a" style="left:769px;top:76px;width:71px;height:32px;background:#444;border:1px solid #595959;border-bottom:none;border-radius:3px 3px 0 0"></div>
<svg class="a" style="left:779px;top:81px" width="20" height="19" viewBox="0 0 20 19">
<path d="M2.5 2.5L9 9.5 2.5 16.5M11 2.5L17.5 9.5 11 16.5" stroke="#2a8ad2" stroke-width="2.7" fill="none" stroke-linecap="round" stroke-linejoin="round"/></svg>
<div class="a tx " style="left:802px;top:85px;font-size:13px;line-height:13px;color:#f0f0f0;font-weight:400;letter-spacing:-0.1px">Sent</div>
<svg class="a" style="left:850px;top:82px" width="20" height="19" viewBox="0 0 20 19">
<path d="M9 2.5L2.5 9.5 9 16.5M17.5 2.5L11 9.5 17.5 16.5" stroke="#2a8ad2" stroke-width="2.7" fill="none" stroke-linecap="round" stroke-linejoin="round"/></svg>
<div class="a tx " style="left:874px;top:86px;font-size:13px;line-height:13px;color:#f0f0f0;font-weight:400;letter-spacing:-0.45px">Received</div>
<div class="a" style="left:779px;top:116px;width:481px;height:544px;background:#232323;overflow:hidden"><div class="a tx " style="left:5px;top:7px;font-size:13px;line-height:13px;color:#f0f0f0;font-weight:400;">Url: http://54.37.75.118/prepare?id=ur8da0026niutsukdco2&amp;data=b231a9d63fd481b2c</div><div class="a tx " style="left:5px;top:23px;font-size:13px;line-height:13px;color:#f0f0f0;font-weight:400;">Method: GET</div><div class="a tx " style="left:5px;top:55px;font-size:13px;line-height:13px;color:#f0f0f0;font-weight:400;letter-spacing:-0.06px">Accept-Encoding: gzip, deflate</div><div class="a tx " style="left:5px;top:71px;font-size:13px;line-height:13px;color:#f0f0f0;font-weight:400;">Accept: */*</div></div>
<div class="a" style="left:779px;top:645px;width:481px;height:15px;background:#393939"></div>
<div class="a" style="left:780px;top:645px;width:14px;height:14px;background:#3c3c3c;border:1px solid #555"></div>
<div class="a" style="left:794px;top:645px;width:44px;height:14px;background:#444;border:1px solid #575757"></div>
<div class="a" style="left:1246px;top:645px;width:14px;height:14px;background:#3c3c3c;border:1px solid #555"></div>
<svg class="a" style="left:780px;top:645px" width="14" height="14"><path d="M9 3.5L5 7 9 10.5z" fill="#cfcfcf"/></svg>
<svg class="a" style="left:1246px;top:645px" width="14" height="14"><path d="M5.5 3.5L9.5 7 5.5 10.5z" fill="#cfcfcf"/></svg>
<div class="a" style="left:0;top:680px;width:1280px;height:1px;background:#767676"></div>
<div class="a" style="left:0;top:681px;width:1280px;height:43px;background:#474747;border-bottom:1px solid #525252"></div>
<div class="a" style="left:1190px;top:690px;width:80px;height:24px;background:linear-gradient(180deg,#464646,#3d3d3d);border:1px solid #262626;border-radius:3px;box-shadow:inset 0 0 0 1px #525252"></div>
<svg class="a" style="left:1206px;top:694px" width="16" height="16" viewBox="0 0 16 16"><rect x="0.5" y="0.5" width="15" height="15" rx="2" fill="#c44b4f"/><path d="M4.5 4.5L11.5 11.5M11.5 4.5L4.5 11.5" stroke="#f0e6e6" stroke-width="1.3"/></svg>
<div class="a tx " style="left:1224px;top:696px;font-size:13px;line-height:13px;color:#f0f0f0;font-weight:400;letter-spacing:-0.5px">Close</div></div>
</body></html>
